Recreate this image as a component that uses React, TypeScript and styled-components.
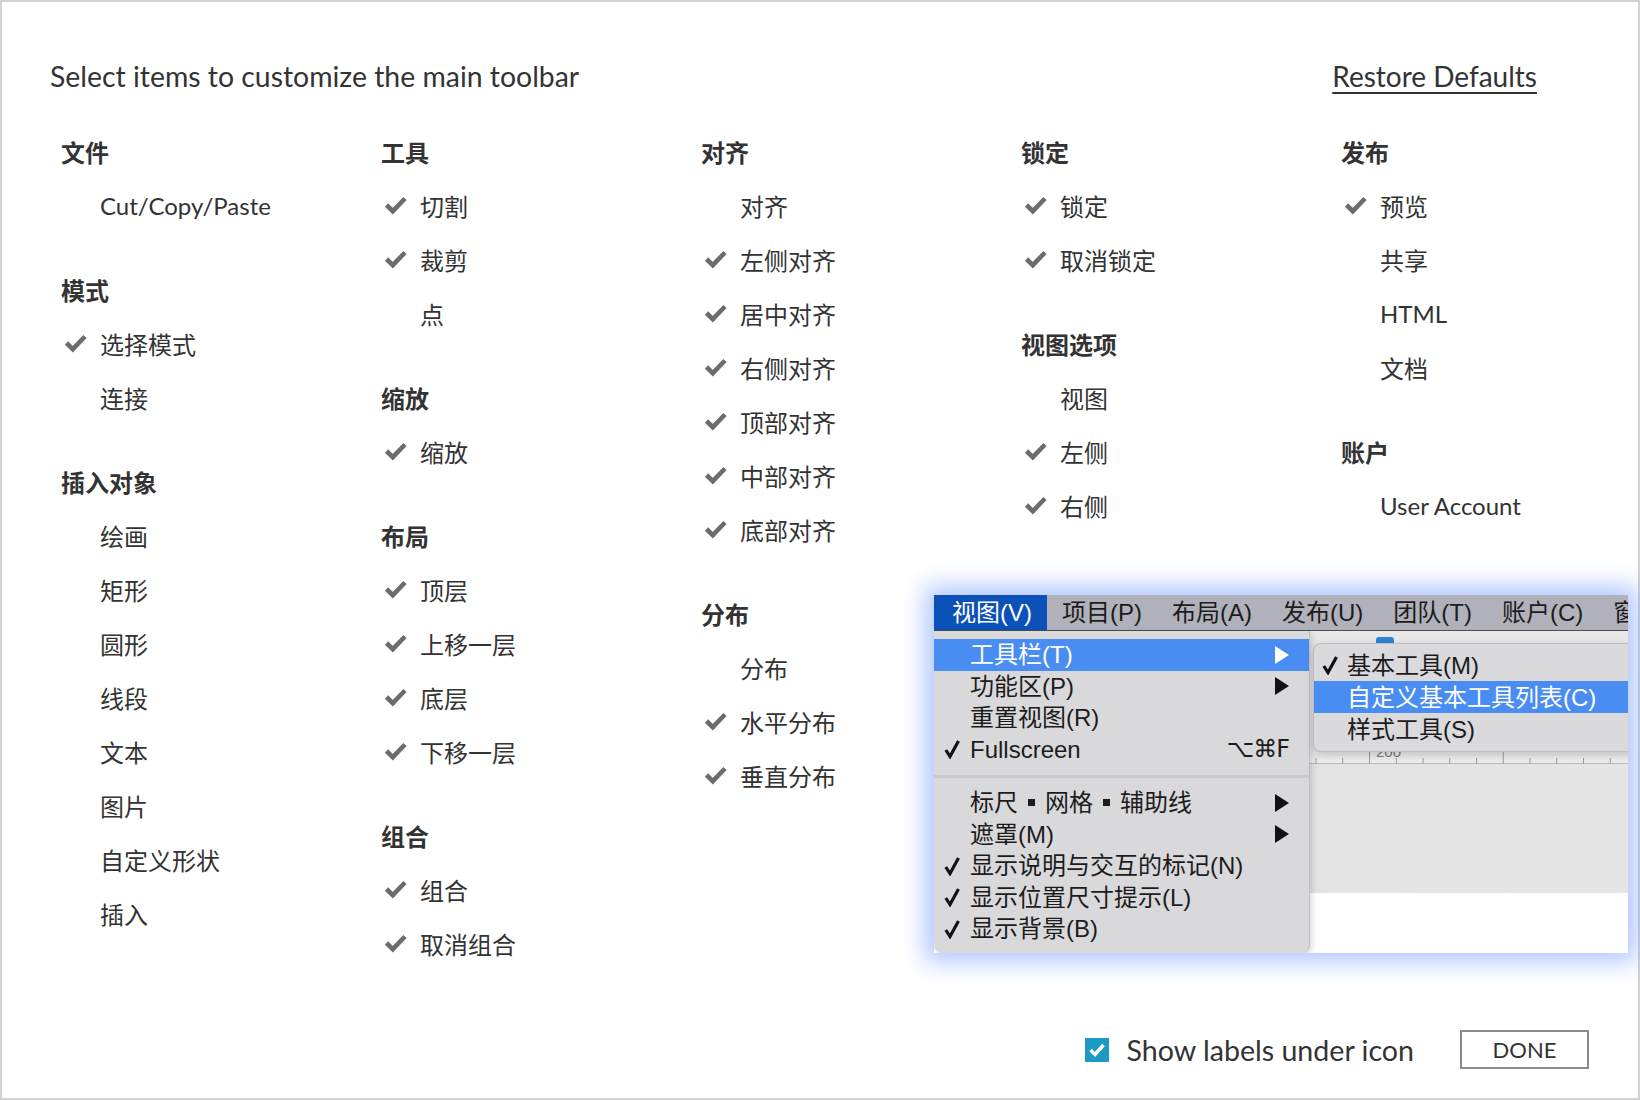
import React from 'react';
import styled, { createGlobalStyle } from 'styled-components';

const GlobalStyle = createGlobalStyle`
  html, body { margin: 0; padding: 0; background: #ffffff; }
  * { box-sizing: border-box; }
`;

const SANS = `Lato, "Noto Sans CJK SC", sans-serif`;
const MENU = `"Liberation Sans", "Noto Sans CJK SC", sans-serif`;

const Page = styled.div`
  position: relative;
  width: 1640px;
  height: 1100px;
  border: 2px solid #d3d3d3;
  display: flex;
  flex-direction: column;
  padding: 56px 49px 29px 48px;
  font-family: ${SANS};
  color: #333333;
`;

const Header = styled.div`
  display: flex;
  justify-content: space-between;
  align-items: center;
  height: 36px;
  padding-right: 52px;
`;

const Title = styled.div`
  font-size: 28.4px;
  color: #333;
`;

const RestoreLink = styled.a`
  font-size: 28px;
  color: #333;
  text-decoration: underline;
  text-underline-offset: 5px;
  text-decoration-thickness: 2px;
`;

const Body = styled.div`
  display: flex;
  align-items: flex-start;
  margin: 30px 0 0 11px;
`;

const Column = styled.div`
  width: 320px;
  flex: none;
  display: flex;
  flex-direction: column;
`;

const RightArea = styled.div`
  flex: none;
  display: flex;
  flex-direction: column;
`;

const RightCols = styled.div`
  display: flex;
`;

const Section = styled.div`
  display: flex;
  flex-direction: column;
  & + & { margin-top: 30px; }
`;

const Heading = styled.div`
  height: 54px;
  display: flex;
  align-items: center;
  font-size: 24px;
  font-weight: 700;
  color: #333;
`;

const Item = styled.div`
  height: 54px;
  display: flex;
  align-items: center;
  font-size: 24px;
  color: #333;
`;

const CheckSlot = styled.span`
  width: 39px;
  display: flex;
  align-items: center;
  padding-left: 3px;
`;

const Footer = styled.div`
  margin-top: auto;
  display: flex;
  justify-content: flex-end;
  align-items: center;
  height: 39px;
`;

const CheckBox = styled.span`
  width: 24px;
  height: 24px;
  background: #1b9ac4;
  display: flex;
  align-items: center;
  justify-content: center;
  margin-right: 18px;
`;

const FooterLabel = styled.span`
  font-size: 28.6px;
  color: #333;
  margin-right: 46px;
`;

const DoneButton = styled.button`
  width: 129px;
  height: 39px;
  border: 2px solid #8a8a8a;
  background: #fff;
  font-family: ${SANS};
  font-size: 22px;
  color: #333;
  padding: 0;
`;

/* ---------- Menu illustration ---------- */

const Shot = styled.div`
  position: relative;
  width: 694px;
  height: 358px;
  margin: 63px 0 0 -87px;
  overflow: hidden;
  background: #ffffff;
  box-shadow: 0 0 22px 9px rgba(95, 140, 255, 0.48);
  font-family: ${MENU};
  font-size: 24px;
  color: #1c1c1c;
  display: flex;
  flex-direction: column;
`;

const MenuBar = styled.div`
  height: 36px;
  flex: none;
  display: flex;
  align-items: stretch;
  background: #b0b1ba;
  border-bottom: 1px solid #4d4d52;
  line-height: 35px;
`;

const BarItem = styled.div<{ $active?: boolean; $first?: boolean }>`
  display: flex;
  align-items: center;
  padding: 0 15px 0 ${p => (p.$first ? '18px' : '15px')};
  white-space: nowrap;
  background: ${p => (p.$active ? '#0b51b7' : 'transparent')};
  color: ${p => (p.$active ? '#ffffff' : '#1c1c1c')};
`;

const TopStrip = styled.div`
  position: relative;
  height: 133px;
  flex: none;
  background: #e8e8e8;
  display: flex;
  flex-direction: column;
  justify-content: flex-end;
`;

const AppIcon = styled.span`
  position: absolute;
  left: 442px;
  top: 6px;
  width: 18px;
  height: 14px;
  border-radius: 3px;
  background: #2a84d8;
`;

const Ruler = styled.div`
  position: relative;
  height: 12px;
  background: #ececec;
  border-bottom: 1px solid #b9b9b9;
`;

const RulerLabel = styled.span`
  position: absolute;
  left: 442px;
  bottom: 4px;
  font-size: 15px;
  line-height: 15px;
  color: #7a7a7a;
`;

const Canvas = styled.div`
  height: 129px;
  flex: none;
  background: linear-gradient(90deg, #d8d8d8 0px, #e3e3e3 400px, #e5e5e5 100%);
`;

const WhiteArea = styled.div`
  flex: 1;
  background: #ffffff;
`;

const Dropdown = styled.div`
  position: absolute;
  left: 0;
  top: 36px;
  width: 376px;
  height: 322px;
  background: #d9d9db;
  border-right: 1px solid #bfbfc2;
  border-radius: 0 0 8px 8px;
  box-shadow: 2px 2px 6px rgba(0, 0, 0, 0.15);
  padding-top: 8px;
  display: flex;
  flex-direction: column;
  z-index: 2;
`;

const MenuRow = styled.div<{ $active?: boolean }>`
  height: 31.5px;
  line-height: 31px;
  flex: none;
  display: grid;
  grid-template-columns: 26px 1fr auto;
  align-items: center;
  padding: 0 20px 0 10px;
  white-space: nowrap;
  background: ${p => (p.$active ? '#4a8df2' : 'transparent')};
  color: ${p => (p.$active ? '#ffffff' : '#1c1c1c')};
`;

const MenuSep = styled.div`
  height: 22px;
  flex: none;
  display: flex;
  align-items: center;
  &::after {
    content: '';
    display: block;
    width: 100%;
    height: 3px;
    background: #c9c9cc;
  }
`;

const Shortcut = styled.span`
  font-family: "DejaVu Sans", "Liberation Sans", sans-serif;
  font-size: 24px;
  letter-spacing: -1px;
`;

const Dot = styled.span`
  display: inline-block;
  width: 7px;
  height: 7px;
  background: #1c1c1c;
  margin: 0 10px 4px;
  vertical-align: middle;
`;

const Submenu = styled.div`
  position: absolute;
  left: 379px;
  top: 48px;
  width: 360px;
  height: 109px;
  background: #dadadc;
  border: 1px solid #bdbdc0;
  border-radius: 8px;
  box-shadow: 0 3px 8px rgba(0, 0, 0, 0.18);
  padding-top: 5px;
  display: flex;
  flex-direction: column;
  z-index: 3;
`;

const SubRow = styled.div<{ $active?: boolean }>`
  height: 32px;
  line-height: 31px;
  flex: none;
  display: grid;
  grid-template-columns: 25px 1fr;
  align-items: center;
  padding-left: 8px;
  white-space: nowrap;
  background: ${p => (p.$active ? '#4a8df2' : 'transparent')};
  color: ${p => (p.$active ? '#ffffff' : '#1c1c1c')};
`;

/* ---------- icons ---------- */

const GrayCheck = () => (
  <svg width="24" height="20" viewBox="0 0 24 20">
    <path d="M2.5 10 L8.8 16.2 L21 3.5" fill="none" stroke="#6c6c6c" strokeWidth="4.6" />
  </svg>
);

const MenuCheck = ({ color = '#111' }: { color?: string }) => (
  <svg width="16" height="20" viewBox="0 0 16 20" style={{ display: 'block' }}>
    <path d="M1.8 11 L6 17.5 L14.5 2" fill="none" stroke={color} strokeWidth="3.2" />
  </svg>
);

const Arrow = ({ color = '#111' }: { color?: string }) => (
  <svg width="14" height="18" viewBox="0 0 14 18" style={{ display: 'block' }}>
    <polygon points="0,0 14,9 0,18" fill={color} />
  </svg>
);

const WhiteCheck = () => (
  <svg width="18" height="16" viewBox="0 0 18 16">
    <path d="M2.5 8 L7 12.5 L15.5 3" fill="none" stroke="#fff" strokeWidth="3.6" />
  </svg>
);

const RulerTicks = () => {
  const ticks: React.ReactNode[] = [];
  for (let i = 0; i < 14; i++) {
    const x = 382 + i * 26.75;
    const major = i % 5 === 2;
    ticks.push(<line key={i} x1={x} x2={x} y1={major ? 0 : 6} y2={12} stroke="#9a9a9a" strokeWidth="1" />);
  }
  return (
    <svg width="694" height="12" viewBox="0 0 694 12" style={{ display: 'block' }}>
      {ticks}
    </svg>
  );
};

/* ---------- data ---------- */

type Entry = { label: string; checked?: boolean };
type Group = { title: string; items: Entry[] };

const c = (label: string): Entry => ({ label, checked: true });
const u = (label: string): Entry => ({ label });

const columns: Group[][] = [
  [
    { title: '文件', items: [u('Cut/Copy/Paste')] },
    { title: '模式', items: [c('选择模式'), u('连接')] },
    { title: '插入对象', items: [u('绘画'), u('矩形'), u('圆形'), u('线段'), u('文本'), u('图片'), u('自定义形状'), u('插入')] },
  ],
  [
    { title: '工具', items: [c('切割'), c('裁剪'), u('点')] },
    { title: '缩放', items: [c('缩放')] },
    { title: '布局', items: [c('顶层'), c('上移一层'), c('底层'), c('下移一层')] },
    { title: '组合', items: [c('组合'), c('取消组合')] },
  ],
  [
    { title: '对齐', items: [u('对齐'), c('左侧对齐'), c('居中对齐'), c('右侧对齐'), c('顶部对齐'), c('中部对齐'), c('底部对齐')] },
    { title: '分布', items: [u('分布'), c('水平分布'), c('垂直分布')] },
  ],
  [
    { title: '锁定', items: [c('锁定'), c('取消锁定')] },
    { title: '视图选项', items: [u('视图'), c('左侧'), c('右侧')] },
  ],
  [
    { title: '发布', items: [c('预览'), u('共享'), u('HTML'), u('文档')] },
    { title: '账户', items: [u('User Account')] },
  ],
];

const GroupColumn = ({ groups }: { groups: Group[] }) => (
  <Column>
    {groups.map(g => (
      <Section key={g.title}>
        <Heading>{g.title}</Heading>
        {g.items.map(it => (
          <Item key={it.label}>
            <CheckSlot>{it.checked ? <GrayCheck /> : null}</CheckSlot>
            {it.label}
          </Item>
        ))}
      </Section>
    ))}
  </Column>
);

const MenuShot = () => (
  <Shot>
    <MenuBar>
      <BarItem $active $first>视图(V)</BarItem>
      <BarItem>项目(P)</BarItem>
      <BarItem>布局(A)</BarItem>
      <BarItem>发布(U)</BarItem>
      <BarItem>团队(T)</BarItem>
      <BarItem>账户(C)</BarItem>
      <BarItem>窗</BarItem>
    </MenuBar>
    <TopStrip>
      <AppIcon />
      <Ruler>
        <RulerTicks />
        <RulerLabel>200</RulerLabel>
      </Ruler>
    </TopStrip>
    <Canvas />
    <WhiteArea />

    <Dropdown>
      <MenuRow $active>
        <span />
        <span>工具栏(T)</span>
        <Arrow color="#fff" />
      </MenuRow>
      <MenuRow>
        <span />
        <span>功能区(P)</span>
        <Arrow />
      </MenuRow>
      <MenuRow>
        <span />
        <span>重置视图(R)</span>
        <span />
      </MenuRow>
      <MenuRow>
        <MenuCheck />
        <span>Fullscreen</span>
        <Shortcut>⌥⌘F</Shortcut>
      </MenuRow>
      <MenuSep />
      <MenuRow>
        <span />
        <span>标尺<Dot />网格<Dot />辅助线</span>
        <Arrow />
      </MenuRow>
      <MenuRow>
        <span />
        <span>遮罩(M)</span>
        <Arrow />
      </MenuRow>
      <MenuRow>
        <MenuCheck />
        <span>显示说明与交互的标记(N)</span>
        <span />
      </MenuRow>
      <MenuRow>
        <MenuCheck />
        <span>显示位置尺寸提示(L)</span>
        <span />
      </MenuRow>
      <MenuRow>
        <MenuCheck />
        <span>显示背景(B)</span>
        <span />
      </MenuRow>
    </Dropdown>

    <Submenu>
      <SubRow>
        <MenuCheck />
        <span>基本工具(M)</span>
      </SubRow>
      <SubRow $active>
        <span />
        <span>自定义基本工具列表(C)</span>
      </SubRow>
      <SubRow>
        <span />
        <span>样式工具(S)</span>
      </SubRow>
    </Submenu>
  </Shot>
);

export default function App() {
  return (
    <>
      <GlobalStyle />
      <Page>
        <Header>
          <Title>Select items to customize the main toolbar</Title>
          <RestoreLink>Restore Defaults</RestoreLink>
        </Header>
        <Body>
          <GroupColumn groups={columns[0]} />
          <GroupColumn groups={columns[1]} />
          <GroupColumn groups={columns[2]} />
          <RightArea>
            <RightCols>
              <GroupColumn groups={columns[3]} />
              <GroupColumn groups={columns[4]} />
            </RightCols>
            <MenuShot />
          </RightArea>
        </Body>
        <Footer>
          <CheckBox>
            <WhiteCheck />
          </CheckBox>
          <FooterLabel>Show labels under icon</FooterLabel>
          <DoneButton>DONE</DoneButton>
        </Footer>
      </Page>
    </>
  );
}
